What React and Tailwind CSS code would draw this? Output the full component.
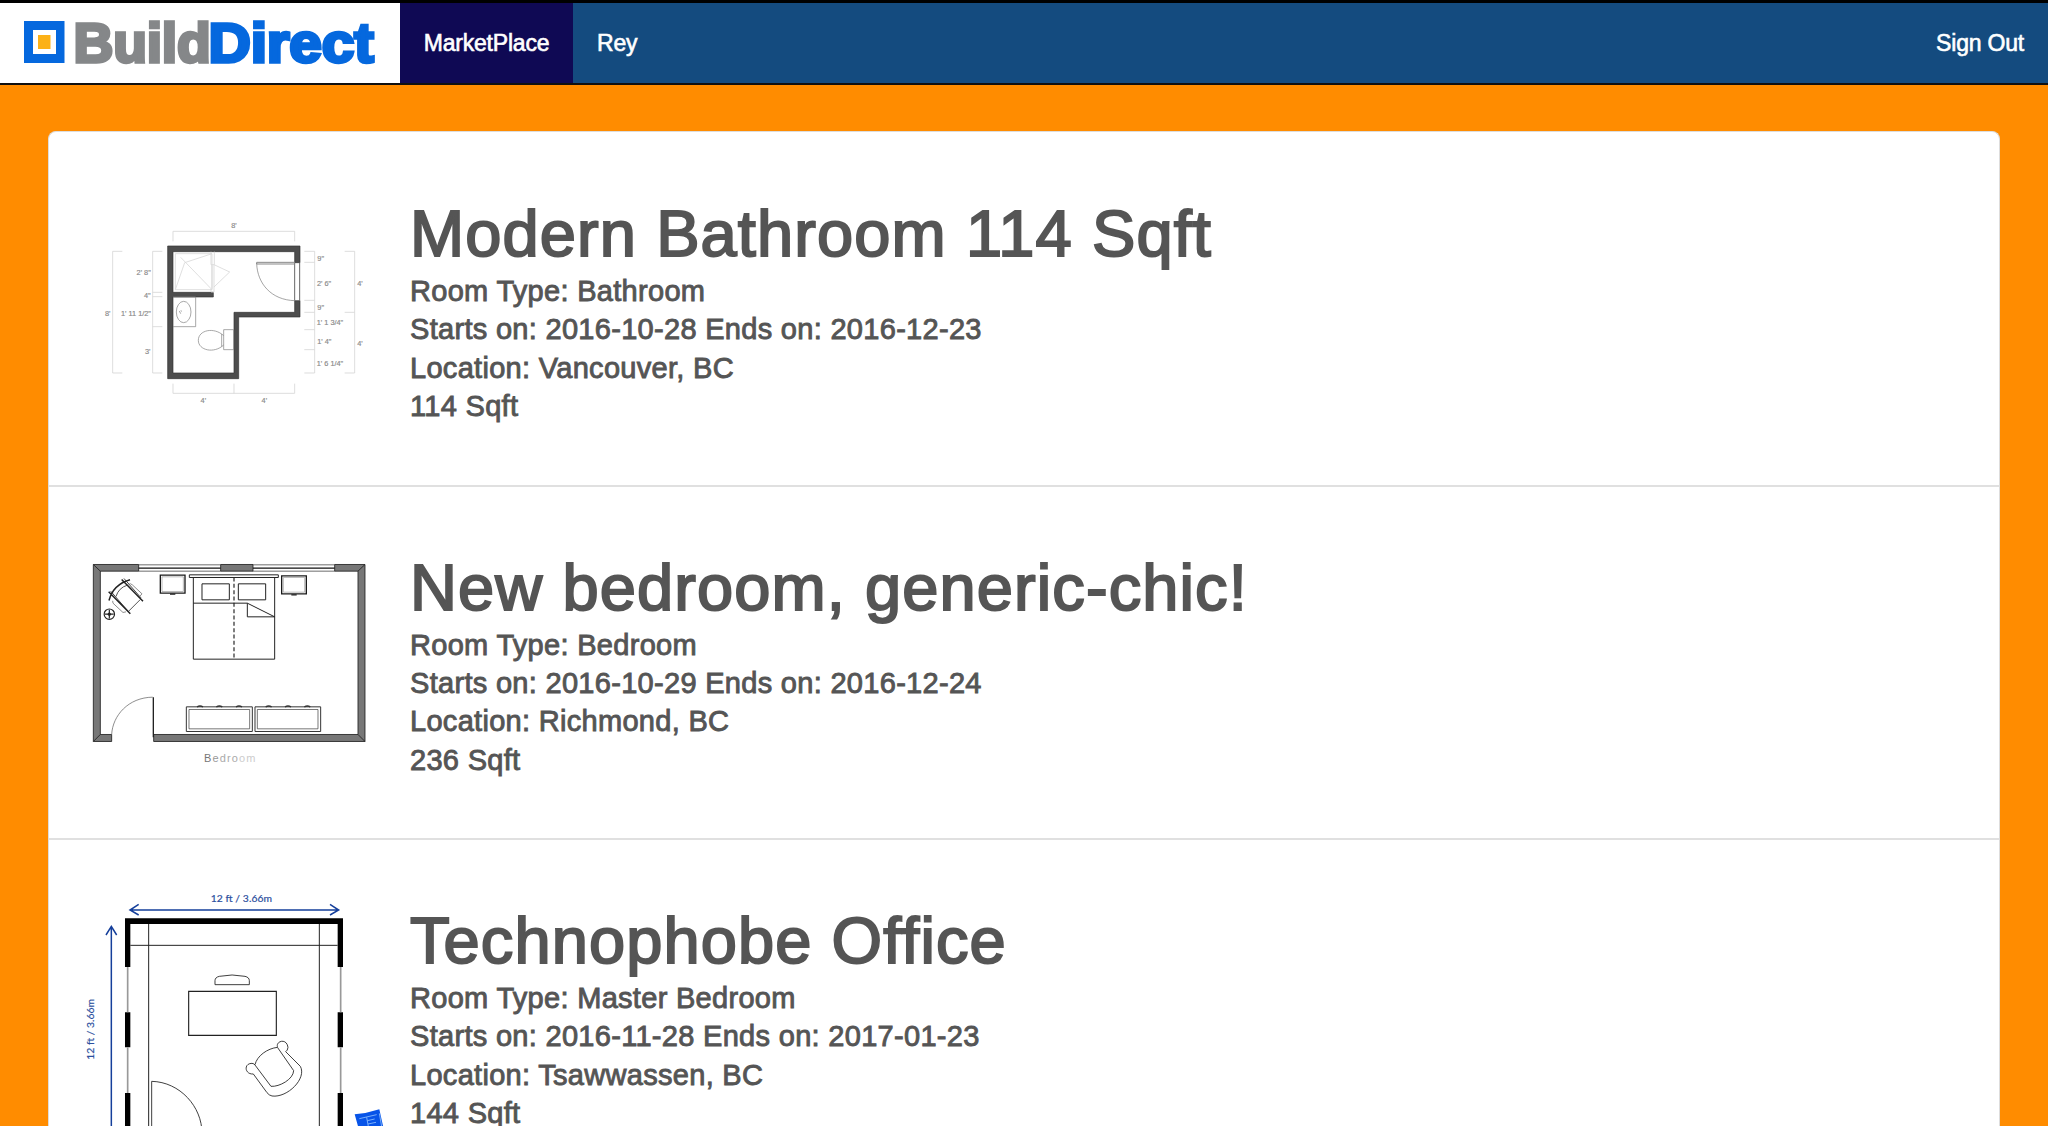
const rooms = [
  {
    title: "Modern Bathroom 114 Sqft",
    type: "Bathroom",
    starts: "2016-10-28",
    ends: "2016-12-23",
    location: "Vancouver, BC",
    size: 114,
    Plan: BathroomPlan,
  },
  {
    title: "New bedroom, generic-chic!",
    type: "Bedroom",
    starts: "2016-10-29",
    ends: "2016-12-24",
    location: "Richmond, BC",
    size: 236,
    Plan: BedroomPlan,
  },
  {
    title: "Technophobe Office",
    type: "Master Bedroom",
    starts: "2016-11-28",
    ends: "2017-01-23",
    location: "Tsawwassen, BC",
    size: 144,
    Plan: OfficePlan,
  },
];

function PlanFrame({ label, children }) {
  return (
    <svg
      role="img"
      aria-label={label}
      viewBox="0 1 320 351"
      className="h-[351px] w-[320px] shrink-0"
      fill="none"
    >
      {children}
    </svg>
  );
}

function BathroomPlan() {
  const dims = [
    [432, 55, "8'"],
    [161, 195, "2' 8\""],
    [172, 264, "4\""],
    [138, 318, "1' 11 1/2\""],
    [53, 318, "8'"],
    [173, 431, "3'"],
    [340, 579, "4'"],
    [523, 579, "4'"],
    [692, 152, "9\""],
    [702, 227, "2' 6\""],
    [692, 300, "9\""],
    [720, 345, "1' 1 3/4\""],
    [703, 401, "1' 4\""],
    [720, 467, "1' 6 1/4\""],
    [810, 227, "4'"],
    [810, 409, "4'"],
  ];
  return (
    <PlanFrame label="Bathroom floor plan">
      <g transform="translate(10 78) scale(.33333)">
        <path
          stroke="#d6d6d6"
          strokeWidth="2.5"
          d="M249 94V64H614V94M97 124H68V489H97M217 124H188V489H217M188 247H217M188 260H217M188 350H217M249 521V550H614V521M432 521V550M643 124H674V489H643M643 157H674M643 271H674M643 307H674M643 359H674M643 419H674M764 124H794V489H764M764 307H794"
        />
        <path
          fill="#4d4d4d"
          stroke="#333"
          strokeWidth="2"
          d="M233 108H630V158H614V125H249V247H370V261H249V489H432V307H614V272H630V321H446V506H233Z"
        />
        <path stroke="#666" strokeWidth="3" d="M614 158V272M629 158V272" />
        <path stroke="#888" strokeWidth="3" d="M614 157H500V162H614" />
        <path stroke="#777" strokeWidth="2" d="M500 160C502 222 545 270 614 272" />
        <path
          stroke="#d8d8d8"
          strokeWidth="2.5"
          d="M256 131H366V239H256ZM256 239L284 158L366 131M272 142L366 239M372 164L419 186L372 231M363 125V164H373V125M363 237V246H372V237M366 164V237M372 164V237"
        />
        <g stroke="#888" strokeWidth="2.2">
          <path d="M249 261H317V350H249M401 359H431V419H401Z" />
          <ellipse cx="281" cy="306" rx="22" ry="32" />
          <path d="M268 303L272 311M272 302L276 304" />
          <path d="M401 377C372 350 325 360 325 391C325 421 372 432 401 405M395 372V410" />
        </g>
        <g
          fill="#8a8a8a"
          stroke="#8a8a8a"
          strokeWidth=".5"
          fontFamily="Liberation Sans, sans-serif"
          fontSize="22"
          textAnchor="middle"
        >
          {dims.map(([x, y, text], i) => (
            <text key={i} x={x} y={y}>
              {text}
            </text>
          ))}
        </g>
      </g>
    </PlanFrame>
  );
}

function BedroomPlan() {
  return (
    <PlanFrame label="Bedroom floor plan">
      <g transform="translate(0 64.5) scale(.33333)">
        <g fill="#777" stroke="#1f1f1f" strokeWidth="2.5">
          <path d="M40 42H176V62H61V552H95V573H40ZM422 42H519V62H422ZM764 42H855V573H221V552H834V62H764Z" />
          <path d="M40 42L61 62M40 573L61 552M855 42L834 62M855 573L834 552" />
        </g>
        <path stroke="#222" strokeWidth="2" d="M176 43H422M519 43H764M176 62H422M519 62H764" />
        <path stroke="#111" strokeWidth="3.5" d="M176 53H422M519 53H764" />
        <g stroke="#222" strokeWidth="3">
          <path d="M328 73H595V81H328ZM340 81V326H584V81M340 158H502L584 199H502V158" />
          <path d="M366 100H448V148H366ZM475 100H557V148H475Z" />
          <path strokeDasharray="12 7" strokeWidth="3.5" d="M462 81V326" />
        </g>
        <g stroke="#1a1a1a" strokeWidth="4">
          <path d="M241 74H315V128H241ZM605 76H679V130H605Z" />
          <path d="M270 131H286M634 133H650" />
        </g>
        <path stroke="#777" strokeWidth="1.5" d="M246 79H310V123H246ZM610 81H674V125H610Z" />
        <g stroke="#333" strokeWidth="2.5">
          <path stroke="#222" strokeWidth="4.5" d="M87 150Q100 102 150 88M125 87L189 152M86 124L151 190" />
          <path stroke="#222" strokeWidth="2.5" d="M132 84L183 142M92 122L146 184" />
          <path d="M108 138Q116 112 142 104M181 147L146 182" />
          <path stroke="#777" d="M146 102Q151 97 157 103L186 130L180 137M98 151L99 158L129 186L138 184" />
        </g>
        <g stroke="#222" strokeWidth="3.5">
          <circle cx="88" cy="191" r="15.5" />
          <path d="M88 178V204M75 191H101" />
        </g>
        <circle cx="88" cy="191" r="5" fill="#222" />
        <path stroke="#555" strokeWidth="2" d="M95 552C98 495 145 441 218 440" />
        <path stroke="#222" strokeWidth="4" d="M220 440V560" />
        <g stroke="#333" strokeWidth="3">
          <path d="M319 469H517V543H319ZM525 469H722V543H525Z" />
          <path strokeWidth="2" d="M327 477H509V535H327ZM532 477H714V535H532Z" />
          <path
            strokeWidth="4"
            d="M351 469Q360 464 369 469M409 469Q418 464 427 469M468 469Q477 464 486 469M557 469Q566 464 575 469M615 469Q624 464 633 469M673 469Q682 464 691 469"
          />
        </g>
        <text x="372" y="635" fontFamily="Liberation Sans, sans-serif" fontSize="33" textLength="154" fill="#aaa">
          <tspan fill="#777">B</tspan>
          <tspan fill="#999">e</tspan>
          <tspan fill="#aaa">dro</tspan>
          <tspan fill="#ccc">om</tspan>
        </text>
      </g>
    </PlanFrame>
  );
}

function OfficePlan() {
  return (
    <PlanFrame label="Office floor plan">
      <g transform="translate(0 41) scale(.33333)">
        <g stroke="#153f9b" strokeWidth="4.5">
          <path d="M150 90H776M176 73L150 90L176 105M750 73L776 90L750 105M94 140V800M78 165L94 139L110 165" />
        </g>
        <g fill="#2c4f9e" stroke="#2c4f9e" strokeWidth=".6" fontFamily="Lato, sans-serif" fontSize="31">
          <text x="392" y="66" textLength="184">
            12 ft / 3.66m
          </text>
          <text transform="translate(43 539) rotate(-90)" textLength="182">
            12 ft / 3.66m
          </text>
        </g>
        <path
          fill="#000"
          d="M135 115H789V261H773V132H151V261H135ZM135 397H151V502H135ZM773 397H789V502H773ZM135 639H151V900H135ZM773 639H789V900H773Z"
        />
        <path stroke="#999" strokeWidth="5" d="M143 261V397M143 502V639M782 261V397M782 502V639" />
        <path stroke="#222" strokeWidth="3" d="M206 132V900M718 132V900M151 196H773" />
        <g stroke="#222" strokeWidth="2.6">
          <path strokeWidth="3.4" d="M326 334H589V466H326Z" />
          <path d="M405 314V302Q405 292 418 289Q456 281 495 289Q508 292 508 302V314Z" />
          <path d="M215 900V604C300 606 366 680 366 760" />
          <path d="M525 554C531 528 562 505 593 502C585 484 620 472 624 502Q623 512 617 515L661 559C681 595 623 654 576 648Q567 646 561 638L520 582C494 584 490 550 516 550Q523 551 525 555L573 619C598 621 640 598 641 572L593 503" />
        </g>
        <path fill="#0754e8" d="M824 703Q862 700 898 688L914 760H840Z" />
        <path stroke="#8fc0ff" strokeWidth="2.5" d="M838 716L890 704M862 722L884 717M864 732L888 727M860 712L866 745M898 700L905 740" />
      </g>
    </PlanFrame>
  );
}

function Logo() {
  return (
    <a href="#" aria-label="BuildDirect" className="block h-full w-[400px] bg-white">
      <svg viewBox="0 0 400 80" className="h-[80px] w-[400px]">
        <path fill="#0568de" d="M24 18H64.5V60H24Z" />
        <path fill="#fff" d="M33 27H56V51H33Z" />
        <path fill="#fcb116" d="M38 32H50.5V46H38Z" />
        <g fontFamily="Liberation Sans, sans-serif" fontWeight="700" fontSize="55.5" strokeWidth="3.4">
          <text x="73.500" y="58.8" fill="#858789" stroke="#858789" textLength="137" lengthAdjust="spacingAndGlyphs">
            Build
          </text>
          <text x="208.500" y="58.8" fill="#0568de" stroke="#0568de" textLength="165" lengthAdjust="spacingAndGlyphs">
            Direct
          </text>
        </g>
      </svg>
    </a>
  );
}

function NavBar() {
  return (
    <header className="flex h-[85px] items-stretch border-t-[3px] border-b-2 border-t-black border-b-[#101010] bg-[#144b7f] text-[23px] tracking-[-0.2px] text-white [-webkit-text-stroke:0.6px_white]">
      <Logo />
      <a href="#" className="flex w-[173px] items-center justify-center bg-[#0f0954] pt-px">
        MarketPlace
      </a>
      <a href="#" className="flex items-center px-6 pt-px">
        Rey
      </a>
      <a href="#" className="ml-auto flex items-center px-6 pt-px">
        Sign Out
      </a>
    </header>
  );
}

function RoomRow({ room }) {
  const { Plan } = room;
  return (
    <li className="flex h-[353.5px] border-b-2 border-[#e0e0e0] pl-[31px]">
      <Plan />
      <div className="flex-1 pt-[66px] pl-[10px] text-[29px] leading-[38.4px] tracking-[0.3px] [-webkit-text-stroke:0.9px_#555]">
        <h1 className="mb-[3px] text-[65px] leading-[70px] tracking-[1.1px] [-webkit-text-stroke:2px_#555]">
          {room.title}
        </h1>
        <p>Room Type: {room.type}</p>
        <p>
          Starts on: {room.starts} Ends on: {room.ends}
        </p>
        <p>Location: {room.location}</p>
        <p>{room.size} Sqft</p>
      </div>
    </li>
  );
}

export default function App() {
  return (
    <div className="h-[1126px] overflow-hidden bg-[#ff8c00] font-['Liberation_Sans',Arial,sans-serif] text-[#555]">
      <NavBar />
      <main className="px-12 pt-[46px]">
        <ul className="rounded-t-lg border border-b-0 border-[#ddd] bg-white pt-px">
          {rooms.map((room) => (
            <RoomRow key={room.title} room={room} />
          ))}
        </ul>
      </main>
    </div>
  );
}
